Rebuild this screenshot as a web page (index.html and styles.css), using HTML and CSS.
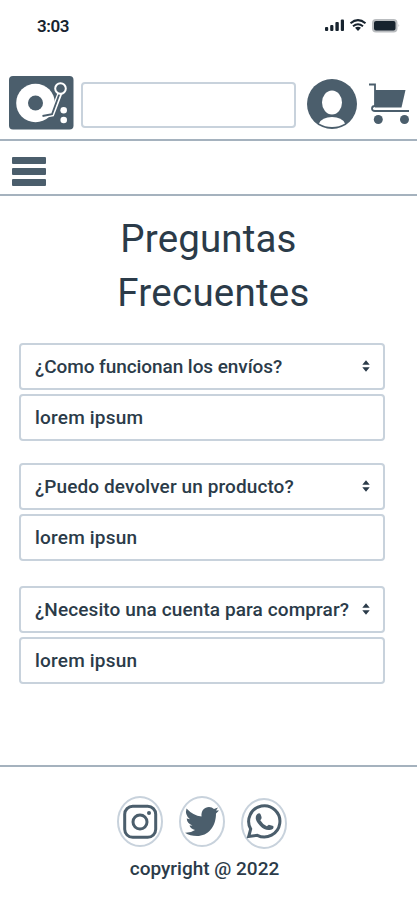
FILE: index.html
```html
<!DOCTYPE html>
<html lang="es">
<head>
<meta charset="utf-8">
<title>Preguntas Frecuentes</title>
<link rel="stylesheet" href="styles.css">
</head>
<body>
<div class="status">
  <span class="time">3:03</span>
  <svg class="status-icons" width="76" height="14" viewBox="0 0 76 14">
    <g fill="#17232e"><rect x="1" y="8" width="3.2" height="4" rx="1"/><rect x="6.2" y="6" width="3.2" height="6" rx="1"/><rect x="11.4" y="3" width="3.4" height="9" rx="1"/><rect x="16.8" y=".5" width="3.2" height="11.5" rx="1"/><path d="M31 8.8q3-2 6 0L34 12z"/></g>
    <path d="M26.5 4.2q7.500-6.200 15 0M29 7.200q5-4 10 0" fill="none" stroke="#17232e" stroke-width="2"/>
    <rect x="49" y="1" width="23.500" height="11.500" rx="3" fill="#17232e" stroke="#b9bcbf" stroke-width="2"/>
    <path d="M74.500 5q1.500 1.500 0 3z" fill="#b9bcbf"/>
  </svg>
</div>
<header class="topbar">
  <svg class="logo" width="65" height="54" viewBox="0 0 65 54">
    <rect width="64.500" height="53.500" rx="4" fill="#4b5e6c"/>
    <circle cx="26.500" cy="27" r="19.300" fill="#fff"/><circle cx="26.500" cy="27" r="7.500" fill="#4b5e6c"/>
    <path d="M33.500 40l9.500-1.800 8-21" fill="none" stroke="#fff" stroke-width="4.800"/>
    <path d="M33.500 40l9.500-1.800 8-22" fill="none" stroke="#4b5e6c" stroke-width="1.900"/>
    <circle cx="51.500" cy="12.500" r="5.300" fill="#4b5e6c" stroke="#fff" stroke-width="2"/>
    <circle cx="54.700" cy="34.300" r="3.300" fill="#fff"/><circle cx="54.700" cy="44" r="3.300" fill="#fff"/>
  </svg>
  <div class="search"></div>
  <svg class="user" width="50" height="50" viewBox="0 0 50 50">
    <circle cx="25" cy="25" r="25" fill="#4b5e6c"/>
    <ellipse cx="25" cy="23.500" rx="10" ry="12" fill="#fff"/>
    <path d="M12 44.500Q15 38 25 38t13 6.500Q32 48 25 48t-13-3.500z" fill="#fff"/>
  </svg>
  <svg class="cart" width="41" height="42" viewBox="0 0 41 42">
    <path d="M0 1.500h6V23q-3 0-3 2.500t3 2.500h34" fill="none" stroke="#4b5e6c" stroke-width="1.800"/>
    <path d="M6 7h30.500l-4 17.500H6z" fill="#4b5e6c"/>
    <circle cx="9.300" cy="36.500" r="4.500" fill="#4b5e6c"/><circle cx="35.500" cy="36.500" r="4.500" fill="#4b5e6c"/>
  </svg>
</header>
<nav class="menu"><div class="burger"><i></i><i></i><i></i></div></nav>
<main>
  <h1><span class="t1">Preguntas</span><br><span class="t2">Frecuentes</span></h1>
  <section class="faq">
    <div class="field"><span class="q1">¿Como funcionan los envíos?</span><svg class="sort" width="8" height="12" viewBox="0 0 8 12"><path d="M.3 4.700L4 .3l3.700 4.400zM.3 7.300h7.400L4 11.700z"/></svg></div>
    <div class="field"><span class="a1">lorem ipsum</span></div>
  </section>
  <section class="faq second">
    <div class="field"><span class="q2">¿Puedo devolver un producto?</span><svg class="sort" width="8" height="12" viewBox="0 0 8 12"><path d="M.3 4.700L4 .3l3.700 4.400zM.3 7.300h7.400L4 11.700z"/></svg></div>
    <div class="field"><span class="a2">lorem ipsun</span></div>
  </section>
  <section class="faq">
    <div class="field"><span class="q3">¿Necesito una cuenta para comprar?</span><svg class="sort" width="8" height="12" viewBox="0 0 8 12"><path d="M.3 4.700L4 .3l3.700 4.400zM.3 7.300h7.400L4 11.700z"/></svg></div>
    <div class="field"><span class="a2">lorem ipsun</span></div>
  </section>
</main>
<footer>
  <div class="social">
    <svg width="46" height="51" viewBox="0 0 46 51">
      <ellipse class="ring" cx="23" cy="25.500" rx="22" ry="24.500"/>
      <rect x="7.700" y="10.300" width="31" height="31" rx="8" fill="none" stroke="#4b5e6c" stroke-width="3"/>
      <circle cx="23" cy="26" r="7" fill="none" stroke="#4b5e6c" stroke-width="3"/><circle cx="32" cy="17" r="2" fill="#4b5e6c"/>
    </svg>
    <svg width="46" height="51" viewBox="0 0 46 51">
      <ellipse class="ring" cx="23" cy="25.500" rx="22" ry="24.500"/>
      <path fill="#4b5e6c" d="M7.500 12.500Q14 19.500 22.500 20.500C22 14.500 25.500 11 30 11Q33 11 35 13L39 11.500 37 14.500 40 14.500 37 17.500C37 31 29 40 18 40Q11 40 6 36.800 12 37 16 34 11.500 32.800 10.500 29.500L13.500 29.500Q8 27.500 7.700 22.500L11 23.300Q5.500 19 7.500 12.500z"/>
    </svg>
    <svg class="wa" width="46" height="51" viewBox="0 0 46 51">
      <ellipse class="ring" cx="23" cy="25.500" rx="22" ry="24.500"/>
      <path d="M7.700 38.500l2-7.500A15.600 15.600 0 1 1 16.300 37.300z" fill="none" stroke="#4b5e6c" stroke-width="3"/>
      <path d="M16.300 16q2.300-1.700 3.500.7l.8 2.600q.3 1.500-1.300 3 2.500 4.200 6.500 6l2-1.500 4.500 1.200q1.200 3.500-3.500 4-5 .7-9.800-4.200-5-5.300-4.200-9 .3-1.800 1.500-2.800z" fill="#4b5e6c"/>
    </svg>
  </div>
  <p class="copy">copyright @ 2022</p>
</footer>
</body>
</html>
```
FILE: styles.css
```css
* { box-sizing: border-box; }
body { margin: 0; height: 902px; background: #fff; color: #2b3b49; font-family: Roboto, "Liberation Sans", sans-serif; display: flex; flex-direction: column; overflow: hidden; }
svg { display: block; flex: none; }
.status { height: 70px; padding: 16px 17px 0 37px; display: flex; justify-content: space-between; align-items: flex-start; }
.time { font-size: 17px; line-height: 21px; font-weight: 600; color: #17232e; letter-spacing: -.4px; }
.status-icons { margin-top: 3px; }
.topbar { height: 70.5px; padding: 6px 7px 0 9px; display: flex; align-items: flex-start; border-bottom: 2px solid #a5b2be; }
.search { width: 215px; height: 46px; margin: 6px 0 0 7px; border: 2px solid #c8d2dc; border-radius: 4px; }
.user { margin: 3px 0 0 10.500px; }
.cart { margin: 7px 0 0 12.500px; }
.menu { height: 55.500px; padding: 16px 12px 0; border-bottom: 2px solid #a5b2be; }
.burger { width: 34px; display: grid; gap: 4px; }
.burger i { height: 7.300px; border-radius: 1px; background: #4b5e6c; }
main { height: 569px; padding: 16px 32px 0 19px; }
h1 { margin: 0 -13px 23px 0; font-size: 38.500px; line-height: 54px; font-weight: 400; text-align: center; white-space: nowrap; }
.t1 { letter-spacing: .15px; }
.t2 { letter-spacing: .25px; margin-left: 10px; }
.faq { display: grid; gap: 4px; margin-bottom: 22px; }
.second { margin-bottom: 25px; }
.field { width: 366px; height: 47px; padding: 0 13px 0 14px; border: 2px solid #c8d2dc; border-radius: 4px; display: flex; align-items: center; justify-content: space-between; font-size: 19px; font-weight: 500; white-space: nowrap; }
.sort { fill: #2b3b49; margin-bottom: 1px; }
.q1 { letter-spacing: -.07px; }
.q2, .q3 { letter-spacing: .1px; }
.a1, .a2 { letter-spacing: .2px; }
footer { flex: 1; border-top: 2px solid #a5b2be; padding-top: 29px; }
.social { width: 170px; margin-left: 117px; display: flex; gap: 16px; }
.wa { margin-top: 2px; }
.ring { fill: none; stroke: #c8d2dc; stroke-width: 2; }
.copy { margin: 8px 0 0; text-align: center; padding-right: 8px; font-size: 19px; line-height: 24px; font-weight: 500; }
```
